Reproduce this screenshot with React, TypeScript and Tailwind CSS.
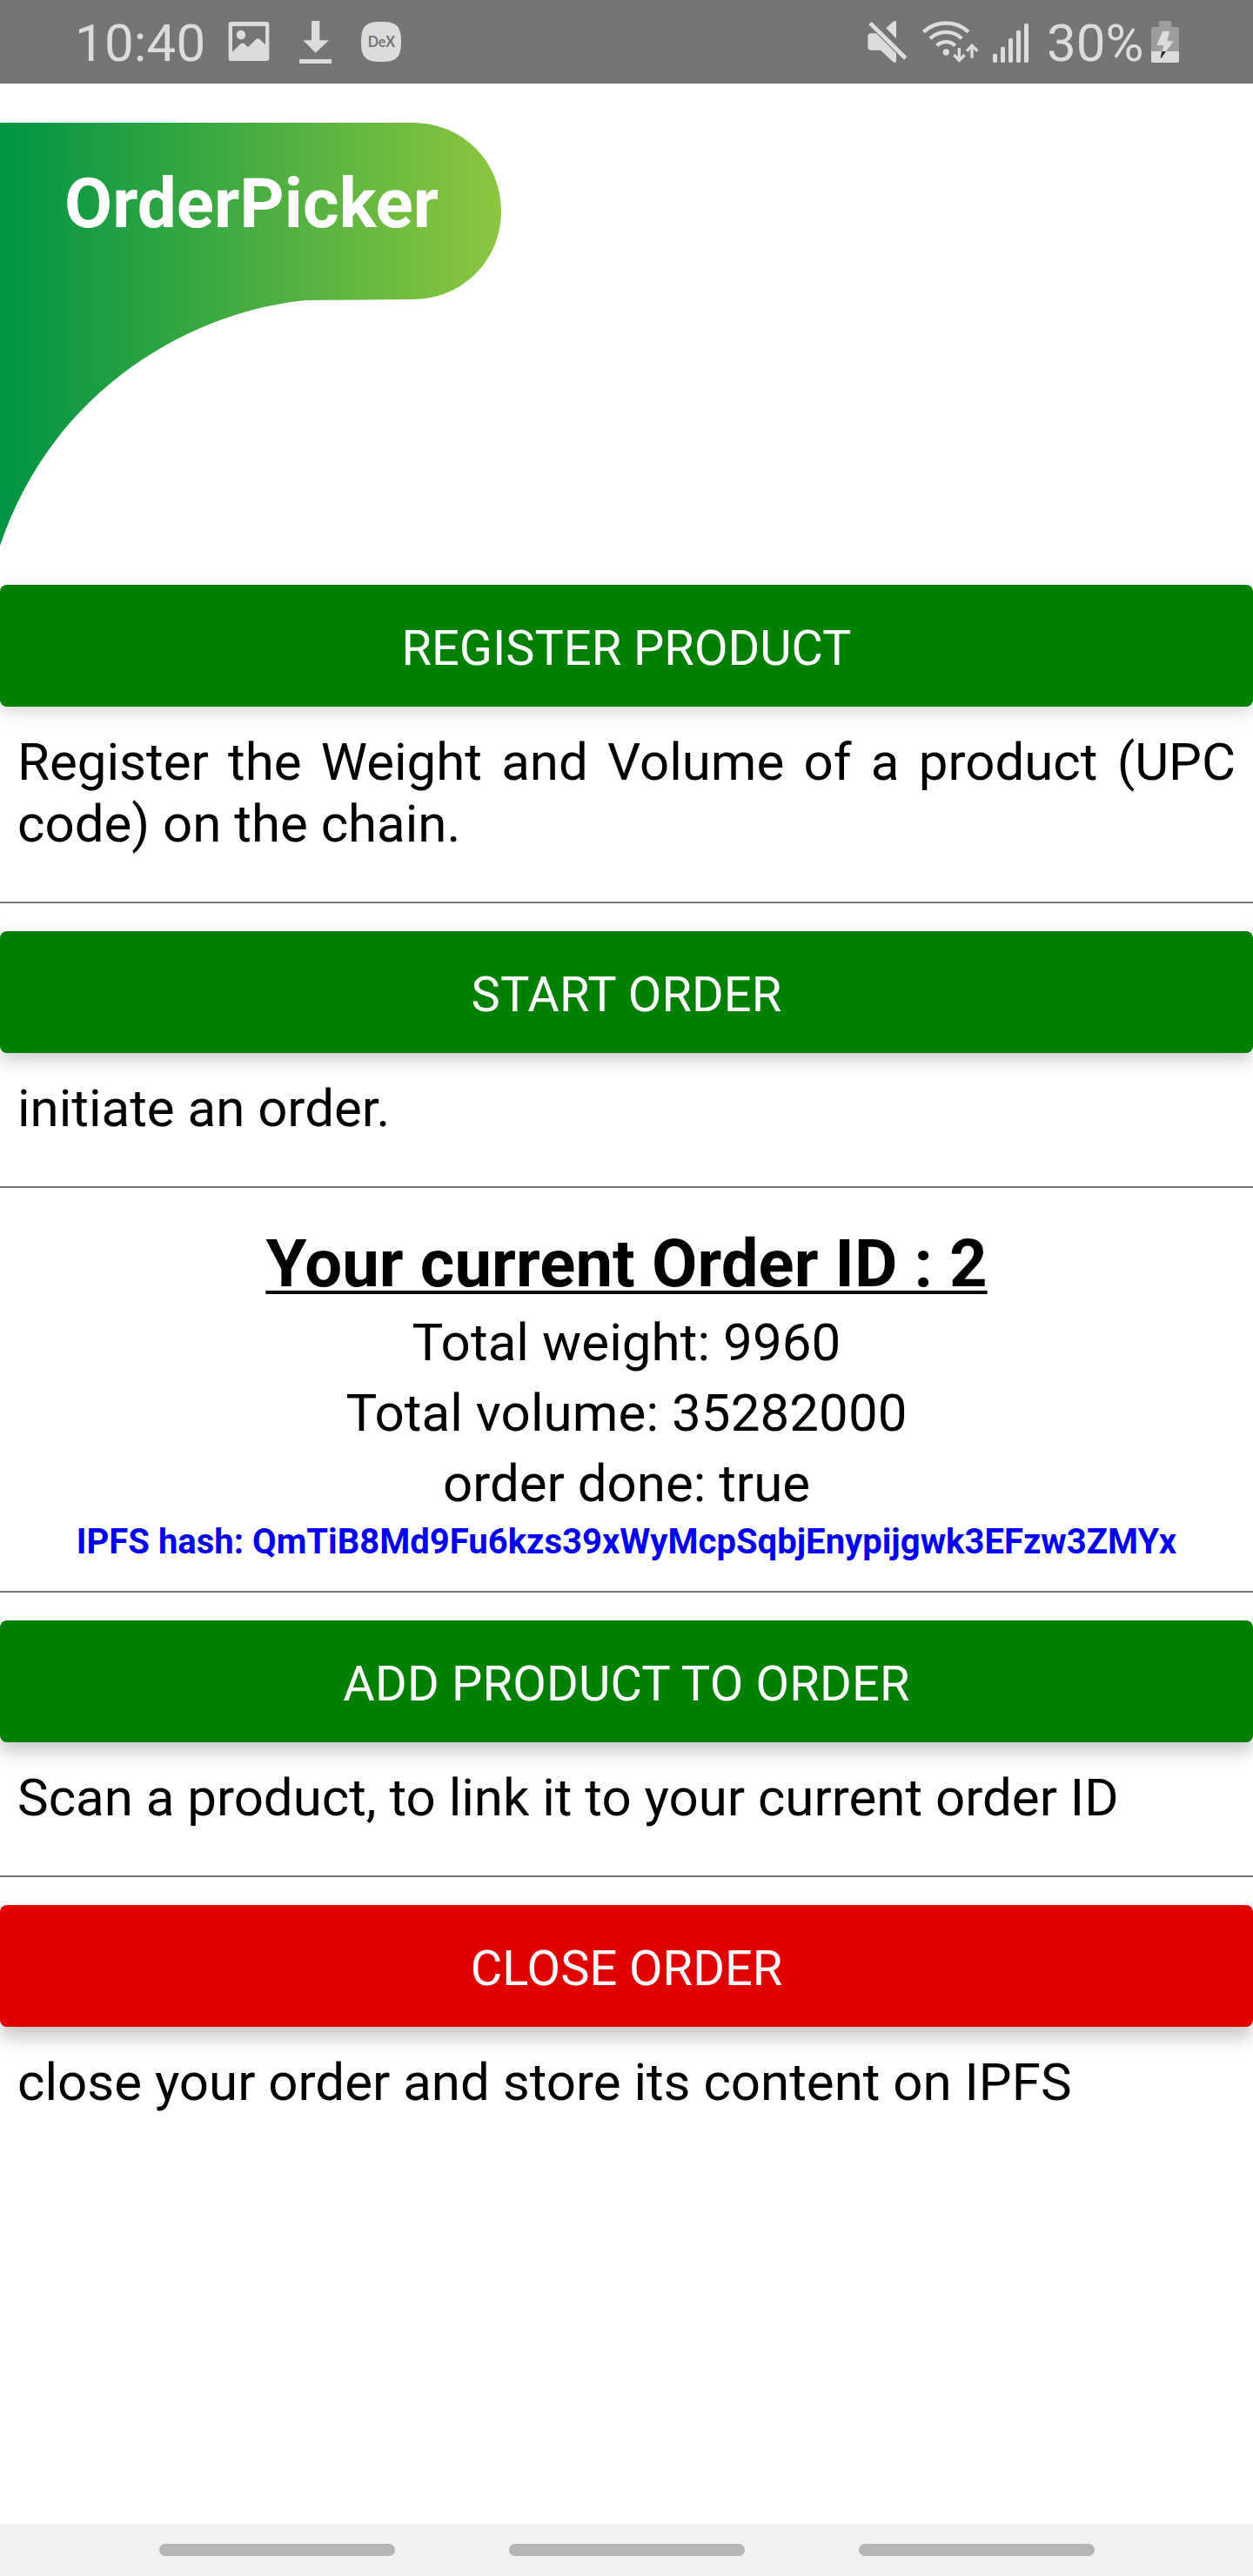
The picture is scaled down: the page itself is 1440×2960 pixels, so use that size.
import React from "react";

const INK = "#dcdcdc";

function ImageIcon() {
  return (
    <svg className="ml-[28px] h-[96px] w-[48px]" viewBox="606 0 144 288">
      <path
        fill={INK}
        fillRule="evenodd"
        d="M617 75H739Q748 75 748 84V201Q748 210 739 210H617Q608 210 608 201V84Q608 75 617 75ZM621 90V179L650 151Q656 146 662 151L675 163L703 135Q709 130 715 135L735 154V90Z"
      />
      <circle cx="651" cy="120" r="15.500" fill={INK} />
    </svg>
  );
}

function DownloadIcon() {
  return (
    <svg className="ml-[33px] h-[96px] w-[40px]" viewBox="849 0 120 288">
      <path fill={INK} d="M894 72H922V139H954L908 182L865 139H894ZM852 204H963V219H852Z" />
    </svg>
  );
}

function DexIcon() {
  return (
    <svg className="ml-[31px] h-[96px] w-[48px]" viewBox="1062 0 144 288">
      <path
        fill={INK}
        d="M1134 75C1188 75 1203 91 1203 144C1203 197 1188 213 1134 213C1080 213 1065 197 1065 144C1065 91 1080 75 1134 75Z"
      />
      <text
        x="1135"
        y="161"
        textAnchor="middle"
        textLength="94"
        lengthAdjust="spacingAndGlyphs"
        fontFamily="Lato"
        fontWeight="700"
        fontSize="49"
        fill="#757575"
      >
        DeX
      </text>
    </svg>
  );
}

function MuteIcon() {
  return (
    <svg className="h-[96px] w-[48px]" viewBox="108 0 144 288">
      <g fill={INK}>
        <path d="M123 115H141L210 184V211Q210 216 205 216Q202 216 199 213L156 173H123Q112 173 112 162V126Q112 115 123 115Z" />
        <path d="M175 97L199 75Q202 72 206 72Q210 72 210 76V133Z" />
        <path d="M125 75L247 195L237 206L115 85Z" />
      </g>
    </svg>
  );
}

function WifiIcon() {
  return (
    <svg className="ml-[14px] h-[96px] w-[68px]" viewBox="294 0 204 288">
      <g fill="none" stroke={INK} strokeWidth="13">
        <path d="M304 110A114 114 0 0 1 459 110" />
        <path d="M327 133A77 77 0 0 1 436 133" />
        <path d="M350 157A46 46 0 0 1 413 157" />
      </g>
      <circle cx="382" cy="180" r="11" fill={INK} />
      <g fill="none" stroke={INK} strokeWidth="10">
        <path d="M427 165V206M409 189L427 208L446 189" />
        <path d="M471 200V160M453 176L471 157L490 176" />
      </g>
    </svg>
  );
}

function SignalIcon() {
  return (
    <svg className="ml-[14px] h-[96px] w-[44px]" viewBox="540 0 132 288">
      <g fill={INK}>
        <rect x="543" y="185" width="15" height="31" rx="5" />
        <rect x="570" y="161" width="15" height="55" rx="5" />
        <rect x="597" y="132" width="15" height="84" rx="5" />
        <rect x="624" y="104" width="15" height="112" rx="5" />
        <rect x="651" y="81" width="15" height="135" rx="5" />
      </g>
    </svg>
  );
}

function BatteryIcon() {
  return (
    <svg className="h-[96px] w-[34px]" viewBox="1086 0 102 288">
      <path fill="#9d9d9d" d="M1119 72H1155Q1159 72 1159 76V93H1180Q1185 93 1185 98V177H1089V98Q1089 93 1094 93H1115V76Q1115 72 1119 72Z" />
      <path fill={INK} d="M1089 177H1185V210Q1185 216 1179 216H1095Q1089 216 1089 210Z" />
      <path fill={INK} d="M1128 108H1153L1144 142H1166L1140 177H1126L1132 156H1108Z" />
      <path fill="#2e2e2e" d="M1126 177H1140L1125 199Q1121 203 1121 197Z" />
    </svg>
  );
}

function StatusBar() {
  return (
    <div className="flex h-[96px] items-center justify-between bg-[#757575] text-[60px] leading-[71px] text-[#dcdcdc]">
      <div className="flex items-center pl-[86px]">
        <span className="w-[148px] whitespace-nowrap pt-[3px] tracking-[0.2px]">10:40</span>
        <ImageIcon />
        <DownloadIcon />
        <DexIcon />
      </div>
      <div className="flex items-center pr-[84px]">
        <MuteIcon />
        <WifiIcon />
        <SignalIcon />
        <span className="ml-[19px] w-[119px] whitespace-nowrap pt-[3px]">30%</span>
        <BatteryIcon />
      </div>
    </div>
  );
}

function Header() {
  return (
    <header className="relative h-[576px]">
      <svg className="absolute left-0 top-[45px] h-[486px] w-[576px]" viewBox="0 141 576 486">
        <defs>
          <linearGradient id="brand" x1="0" x2="1" y1="0" y2="0">
            <stop offset="0" stopColor="#009444" />
            <stop offset="1" stopColor="#8dc63f" />
          </linearGradient>
        </defs>
        <path
          fill="url(#brand)"
          d="M0 141H474C532 141 576 186 576 242.500C576 299 532 344 474 344L352 345C225 357 62 443 0 627Z"
        />
      </svg>
      <h1 className="relative pl-[74px] pt-[91px] text-[80px] font-bold leading-[94px] text-white">
        OrderPicker
      </h1>
    </header>
  );
}

function Action({ label, className }: { label: string; className: string }) {
  return (
    <button
      className={
        "relative block h-[140px] w-full rounded-[8px] pt-[6px] text-center text-[56px] leading-[134px] text-white " +
        className
      }
    >
      {label}
    </button>
  );
}

function Note({ children }: { children: React.ReactNode }) {
  return <p className="relative px-[20px] pt-[28px] text-justify leading-[71px]">{children}</p>;
}

function Rule({ className }: { className: string }) {
  return <div className={"h-[2px] bg-[#757575] " + className} />;
}

export default function App() {
  return (
    <div className="flex h-[2960px] w-[1440px] flex-col overflow-hidden bg-white font-['Roboto',sans-serif] text-[60px] text-black">
      <StatusBar />
      <Header />
      <main className="flex-1">
        <Action
          label="REGISTER PRODUCT"
          className="bg-[#008000] shadow-[0_5px_20px_rgba(0,0,0,0.18)]"
        />
        <Note>Register the Weight and Volume of a product (UPC code) on the chain.</Note>
        <Rule className="mt-[54px] mb-[32px]" />
        <Action
          label="START ORDER"
          className="bg-[#008000] tracking-[0.1px] shadow-[0_8px_20px_rgba(0,0,0,0.2)]"
        />
        <Note>initiate an order.</Note>
        <Rule className="mt-[54px]" />
        <section className="pt-[42px] text-center leading-[71px]">
          <h2 className="text-[76px] font-bold leading-[90px] tracking-[0.1px] underline decoration-[4px] underline-offset-[5px] [text-decoration-skip-ink:none]">
            Your current Order ID : 2
          </h2>
          <p className="mt-[10px] tracking-[0.1px]">Total weight: 9960</p>
          <p className="mt-[10px] tracking-[0.1px]">Total volume: 35282000</p>
          <p className="mt-[10px]">order done: true</p>
          <p className="mt-[8px] text-[40px] font-bold leading-[47px] tracking-[0.02px] text-[#0000ee]">
            IPFS hash: QmTiB8Md9Fu6kzs39xWyMcpSqbjEnypijgwk3EFzw3ZMYx
          </p>
        </section>
        <Rule className="mt-[33px] mb-[32px]" />
        <Action
          label="ADD PRODUCT TO ORDER"
          className="bg-[#008000] tracking-[0.2px] shadow-[0_11px_20px_rgba(0,0,0,0.22)]"
        />
        <Note>Scan a product, to link it to your current order ID</Note>
        <Rule className="mt-[54px] mb-[32px]" />
        <Action
          label="CLOSE ORDER"
          className="bg-[#e00000] shadow-[0_12px_20px_rgba(0,0,0,0.23)]"
        />
        <Note>close your order and store its content on IPFS</Note>
      </main>
      <nav className="flex h-[60px] items-center justify-center gap-[131px] bg-[#f1f1f1]">
        <span className="h-[14px] w-[271px] rounded-full bg-[#b5b5b5]" />
        <span className="h-[14px] w-[271px] rounded-full bg-[#b5b5b5]" />
        <span className="h-[14px] w-[271px] rounded-full bg-[#b5b5b5]" />
      </nav>
    </div>
  );
}
